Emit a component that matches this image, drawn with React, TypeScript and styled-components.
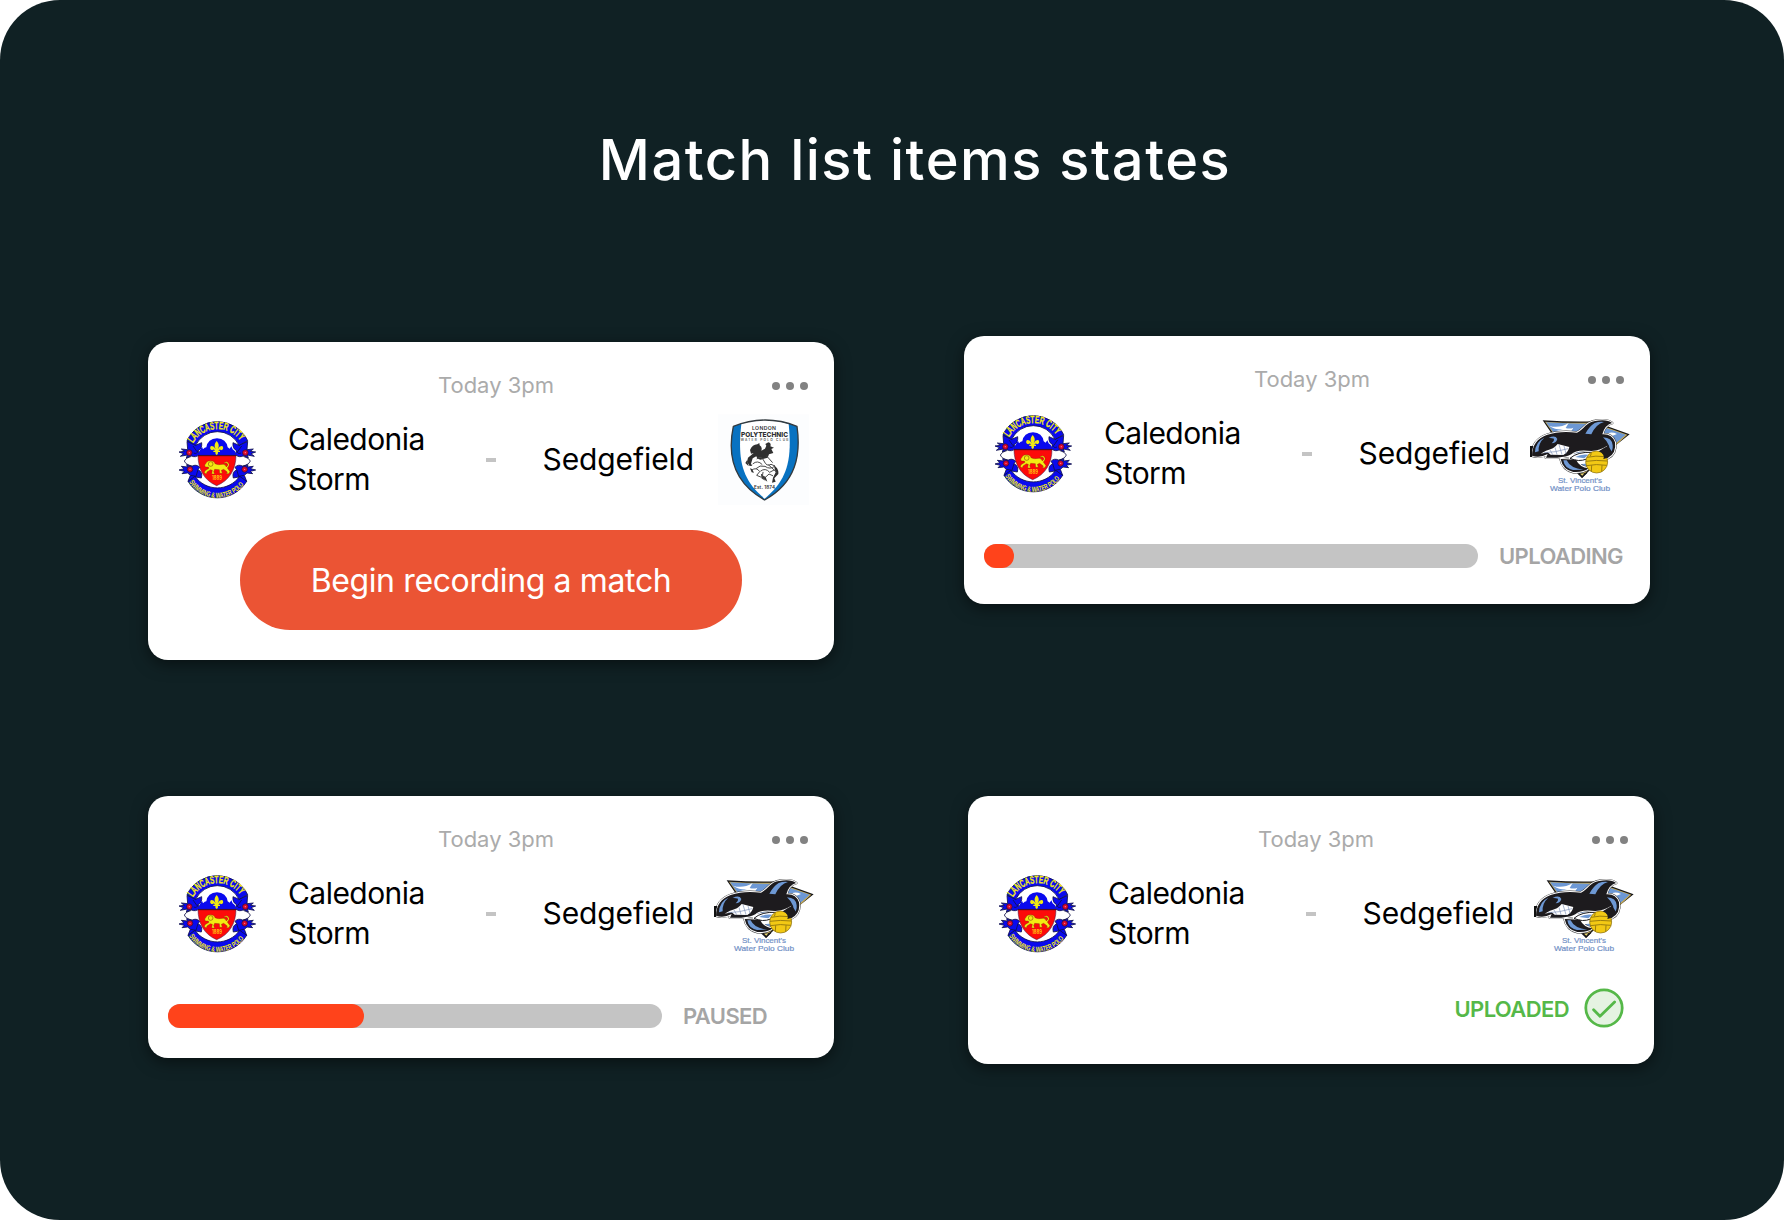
import React, { useId } from 'react'
import styled, { createGlobalStyle } from 'styled-components'

type MatchState = 'ready' | 'uploading' | 'paused' | 'uploaded'

export type MatchCardProps = {
  state: MatchState
  crest: 'polytechnic' | 'vincents'
  height: number
  progress?: number
  offset?: number
}

const GlobalStyle = createGlobalStyle`
  * {
    box-sizing: border-box;
  }

  body {
    margin: 0;
    background: #fff;
    font-family: Inter, 'Liberation Sans', sans-serif;
  }
`

const Page = styled.main`
  width: 1784px;
  height: 1220px;
  padding-top: 120px;
  border-radius: 60px;
  background: #102124;
  overflow: hidden;
`

const Title = styled.h1`
  margin: 0 0 136px;
  padding-left: 46px;
  color: #fff;
  font-size: 56px;
  font-weight: 500;
  line-height: 80px;
  letter-spacing: 1.5px;
  text-align: center;
`

const CardRow = styled.div<{ $gap: number; $height: number }>`
  display: flex;
  align-items: flex-start;
  gap: ${({ $gap }) => $gap}px;
  height: ${({ $height }) => $height}px;
  padding-left: 148px;
`

const Card = styled.article<{ $height: number; $offset: number }>`
  width: 686px;
  height: ${({ $height }) => $height}px;
  margin-top: ${({ $offset }) => $offset}px;
  border-radius: 20px;
  background: #fff;
  box-shadow: 0 4px 16px rgba(0, 0, 0, 0.5);
`

const CardHeader = styled.header`
  display: grid;
  grid-template-columns: 1fr auto 1fr;
  height: 63px;
  padding: 24px 26px 0 36px;
`

const Kickoff = styled.time`
  grid-column: 2;
  color: #ababab;
  font-size: 22px;
  line-height: 38px;
`

const MoreButton = styled.button`
  display: flex;
  justify-self: end;
  align-self: start;
  gap: 6px;
  padding: 16px 0 0;
  border: 0;
  background: none;
`

const Dot = styled.span`
  width: 8px;
  height: 8px;
  border-radius: 50%;
  background: #828282;
`

const Teams = styled.div`
  display: grid;
  grid-template-columns: 140px 198px 10px 198px 140px;
  align-items: center;
  height: 110px;
`

const CrestSlot = styled.div`
  display: flex;
  justify-content: center;
`

const TeamName = styled.span<{ $away?: boolean }>`
  max-width: ${({ $away }) => ($away ? 'none' : '160px')};
  padding-bottom: 2px;
  color: #000;
  font-size: 30px;
  line-height: 40px;
  letter-spacing: ${({ $away }) => ($away ? '-0.1px' : '-0.55px')};
  text-align: ${({ $away }) => ($away ? 'right' : 'left')};
`

const Dash = styled.span`
  width: 10px;
  height: 4px;
  background: #c4c4c4;
`

const RecordButton = styled.button`
  display: block;
  width: 502px;
  height: 100px;
  margin: 15px 0 0 92px;
  padding: 0;
  border: 0;
  border-radius: 50px;
  background: #eb5434;
  color: #fff;
  font-family: inherit;
  font-size: 32px;
  letter-spacing: -0.37px;
`

const Status = styled.div`
  display: flex;
  align-items: center;
  gap: 21px;
  margin-top: 35px;
  padding-left: 20px;
  height: 24px;
`

const Track = styled.div`
  width: 494px;
  height: 24px;
  border-radius: 12px;
  background: #c4c4c4;
`

const Fill = styled.div`
  height: 24px;
  border-radius: 12px;
  background: #ff431b;
`

const StatusLabel = styled.span<{ $done?: boolean }>`
  padding-top: ${({ $done }) => ($done ? 2 : 0)}px;
  color: ${({ $done }) => ($done ? '#55b848' : '#a5a5a5')};
  font-size: 22px;
  font-weight: 600;
  line-height: 24px;
  letter-spacing: -0.6px;
`

const Uploaded = styled.div`
  display: flex;
  align-items: center;
  justify-content: flex-end;
  gap: 15px;
  height: 40px;
  margin-top: 19px;
  padding-right: 30px;
`

const LancasterCrest = () => {
  const id = useId()
  const ribbon = (
    <g stroke="#10104a" strokeWidth="2.5" strokeLinejoin="round">
      <path
        fill="#0a0aee"
        d="M66 106 L92 118 L110 110 Q112 128 99 134 L104 145 Q92 157 78 149 L64 156 L67 147 L46 151 L56 143 L42 138 L58 136 L49 129 L68 131 Z"
      />
      <path
        fill="#0a0aee"
        d="M69 226 L76 208 L68 201 L51 203 L58 196 L42 192 L57 188 L49 181 L67 183 L65 176 L80 181 Q94 173 104 184 L99 191 Q114 198 109 216 L92 213 L88 232 Z"
      />
      <path fill="none" d="M79 151 Q61 156 58 165 Q62 176 81 180" />
    </g>
  )
  const roses = (
    <g>
      <path
        fill="none"
        stroke="#10104a"
        strokeWidth="2.5"
        d="M84 120 L96 137 M86 141 Q96 146 99 134 M77 208 L93 211 L99 191"
      />
      <circle cx="73" cy="140" r="8.5" fill="#d9082b" stroke="#10104a" strokeWidth="2" />
      <circle cx="75" cy="190" r="8.5" fill="#d9082b" stroke="#10104a" strokeWidth="2" />
      <circle cx="73" cy="140" r="2" fill="#ff8b95" />
      <circle cx="75" cy="190" r="2" fill="#ff8b95" />
    </g>
  )

  return (
    <svg width="110" height="110" viewBox="-6 -3 330 330">
      <defs>
        <path id={`${id}top`} d="M84 112 A84 84 0 0 1 230 112" />
        <path id={`${id}bottom`} d="M72 228 A100 100 0 0 0 242 228" />
      </defs>
      {ribbon}
      <g transform="translate(314 0) scale(-1 1)">{ribbon}</g>
      <path
        fill="#0a0aee"
        stroke="#10104a"
        strokeWidth="2.5"
        d="M66 104 A101 101 0 0 1 248 104 L222 118 A72 72 0 0 0 92 118 Z"
      />
      <path
        fill="#0a0aee"
        stroke="#10104a"
        strokeWidth="2.5"
        d="M69 226 A103 103 0 0 0 245 226 L224 211 A82 82 0 0 1 90 211 Z"
      />
      {roses}
      <g transform="translate(314 0) scale(-1 1)">{roses}</g>
      <path
        fill="#0a0aee"
        d="M99 149 L102 137 L108 127 L111 122 L114 130 L119 125 L124 124 Q128 99 156 97 Q184 99 188 124 L194 128 L199 121 L203 130 L210 136 L213 149 Z"
      />
      <path
        fill="#fd0a0a"
        stroke="#35104f"
        strokeWidth="1.5"
        d="M99 148 H213 C213 190 193 224 155 239 C118 224 99 190 99 148 Z"
      />
      <path d="M99 149 H213" stroke="#3b0b28" strokeWidth="3" />
      <g fill="#f3ec12">
        <path d="M155 105 Q166 117 158 130 Q165 117 173 121 Q178 130 168 133 Q165 128 160 134 H165 V138 H159 Q160 145 155 147 Q150 145 151 138 H145 V134 H150 Q146 128 142 133 Q132 130 137 121 Q145 117 152 130 Q144 117 155 105 Z" />
        <path
          stroke="#6b3309"
          strokeWidth="1"
          d="M123 172 Q125 164 136 164 Q148 164 150 173 Q158 178 175 175 Q182 176 184 183 Q192 177 186 172 Q179 169 177 173 Q178 166 187 168 Q198 175 187 186 L195 197 L191 203 H184 L187 198 L176 190 L169 193 L172 202 H164 L163 191 L149 190 L146 197 L149 204 H140 L142 193 L136 191 L126 198 L124 204 L118 200 L120 194 L132 187 L130 183 L121 183 L119 177 Z"
        />
        <circle cx="137" cy="174" r="7" fill="none" stroke="#8a5a08" strokeWidth="2" />
        <text
          x="141"
          y="222"
          fontSize="17"
          fontWeight="700"
          fill="#ffc20e"
          textLength="30"
          lengthAdjust="spacingAndGlyphs"
        >
          1889
        </text>
        <text
          fontFamily="Liberation Sans"
          fontSize="32"
          fontWeight="700"
          stroke="#f3ec12"
          strokeWidth="0.8"
        >
          <textPath href={`#${id}top`} textLength="168" lengthAdjust="spacingAndGlyphs">
            LANCASTER CITY
          </textPath>
        </text>
        <text fontFamily="Liberation Sans" fontSize="22" fontWeight="700">
          <textPath href={`#${id}bottom`} textLength="194" lengthAdjust="spacingAndGlyphs">
            SWIMMING &amp; WATER POLO
          </textPath>
        </text>
      </g>
    </svg>
  )
}

const PolytechnicCrest = () => (
  <svg width="100" height="110" viewBox="-3 0 300 330">
    <path fill="#fcfdfe" d="M9 28 H282 V300 H9 Z" />
    <path
      fill="#0872c1"
      d="M55 64 Q150 26 246 64 C258 150 244 232 149 285 C54 232 37 150 55 64 Z"
    />
    <path fill="#fff" d="M79 57 Q149 33 221 57 C232 165 217 225 149 281 C81 225 67 165 79 57 Z" />
    <path
      fill="none"
      stroke="#343b3f"
      strokeWidth="4"
      strokeLinejoin="round"
      d="M55 64 Q150 26 246 64 C258 150 244 232 149 285 C54 232 37 150 55 64 Z"
    />
    <g fill="#2f3133" fontFamily="Inter">
      <text x="111" y="76" fontSize="15.5" fontWeight="600" textLength="72">
        LONDON
      </text>
      <text
        x="78"
        y="96"
        fontSize="20.5"
        fontWeight="800"
        textLength="141"
        lengthAdjust="spacingAndGlyphs"
      >
        POLYTECHNIC
      </text>
      <text x="77" y="109" fontSize="9.5" fontWeight="600" fill="#555" textLength="143">
        WATER POLO CLUB
      </text>
      <text x="117" y="253" fontSize="14" fontWeight="600" textLength="63">
        Est. 1874
      </text>
    </g>
    <g fill="#303030">
      <path d="M105 135 Q112 119 127 118 L133 114 L134 121 Q143 126 139 137 L150 131 L154 122 L151 117 L160 112 Q170 114 166 124 L177 128 L169 132 L175 144 L162 148 L158 158 L137 164 Q126 163 124 154 L113 160 L108 176 L112 182 L104 183 L96 170 L99 158 L116 144 L108 146 Z" />
      <path d="M96 166 L91 174 L101 184 L99 176 Z M176 180 Q192 191 190 207 L178 220 L182 230 L171 233 L174 218 L182 202 Z M105 190 L110 202 L117 203 L111 192 Z" />
      <path d="M138 208 L152 216 L157 230 L147 222 L140 220 Z" />
    </g>
    <g fill="none" stroke="#4a4a4a" strokeWidth="3" strokeLinecap="round">
      <path d="M126 161 Q139 150 147 168 T168 178 L180 183 Q165 195 150 184 Q134 179 124 190" />
      <path d="M114 176 Q128 164 141 178 M110 195 Q125 185 134 200 L125 211 L137 216" />
      <path d="M155 153 L172 172 M137 198 Q151 187 164 202 L177 195 M139 208 L149 219 L162 207 L173 212" />
      <path d="M161 180 L185 202 M144 202 L141 220 L150 225" />
    </g>
  </svg>
)

const whaleBody =
  'M36 152 C36 122 52 100 80 90 Q120 76 171 83 C193 72 199 51 225 48 Q262 42 276 54 Q254 60 247 88 Q276 86 285 112 Q290 146 262 160 L252 160 Q262 146 262 122 Q240 136 214 138 Q168 132 154 148 Q140 156 112 158 L78 158 L83 147 Q59 160 36 152 Z'
const whaleFin = 'M122 162 Q128 194 160 201 Q190 203 206 190 Q178 186 168 164 Z'

const VincentsCrest = () => (
  <svg width="120" height="100" viewBox="0 -3 360 300">
    <path fill="#171719" d="M68 46 Q150 51 220 49 L329 88 L273 132 L186 219 Z" />
    <path fill="#c9ab52" d="M75 50 Q150 55 222 53 L322 89 L188 211 Z" />
    <path fill="#6d98d4" d="M78 52 Q150 57 222 56 L317 89 L187 204 Z" />
    <path
      fill="#fff"
      d="M87 62 Q116 72 146 54 L137 69 Q150 73 160 68 L151 83 L105 79 L132 73 Q109 76 87 62 Z M251 91 Q270 77 291 87 L274 94 L279 102 L258 116 L266 101 L259 99 L265 92 Z"
    />
    <path fill="#111" d="M30 123 H43 V156 H30 Z" />
    <g fill="#fff" stroke="#333" strokeWidth="8.5" strokeLinejoin="round">
      <path d={whaleFin} />
      <path d={whaleBody} />
    </g>
    <g fill="#fff" stroke="#fff" strokeWidth="6" strokeLinejoin="round">
      <path d={whaleFin} />
      <path d={whaleBody} />
      <path stroke="none" d="M140 150 L250 130 L250 170 L160 180 Z" />
    </g>
    <path fill="#111" d="M30 123 H40 L36 138 V156 H30 Z" />
    <g fill="#1d1b1e">
      <path d={whaleFin} />
      <path d={whaleBody} />
    </g>
    <path
      fill="#fff"
      d="M62 146 L78 137 Q102 132 113 117 L148 126 Q144 143 130 150 L92 149 L83 142 Z"
    />
    <path
      fill="none"
      stroke="#7d91b8"
      strokeWidth="2"
      d="M72 143 L106 140 L144 131 M90 135 L98 149 M105 127 L111 149 M117 119 L126 149 M132 123 L138 146"
    />
    <g fill="#6d98d4">
      <path d="M45 142 Q46 110 73 98 Q54 115 56 139 Z" />
      <path d="M86 99 Q106 89 112 102 Q108 115 95 115 Q104 108 102 101 Q94 98 86 99 Z" />
      <path d="M196 86 Q207 65 224 54 Q238 49 252 51 Q228 57 214 88 Z" />
      <path d="M249 97 Q277 99 278 121 Q280 139 266 149 Q276 121 249 97 Z" />
      <path d="M130 166 Q133 189 159 195 L190 194 Q151 190 140 166 Z" />
      <path d="M166 156 Q183 146 205 149 L193 160 Z" />
    </g>
    <path
      fill="none"
      stroke="#1d1b1e"
      strokeWidth="3"
      d="M150 160 Q172 140 216 142 M150 160 Q176 172 200 162"
    />
    <circle cx="230" cy="171" r="33" fill="#f2c914" stroke="#80650b" strokeWidth="2" />
    <path
      fill="none"
      stroke="#8a6f0c"
      strokeWidth="2.5"
      d="M201 157 Q226 151 257 155 M198 169 Q228 164 262 168 M199 182 Q229 176 260 181 M215 181 L214 200 M246 181 L245 200 M214 145 L211 154"
    />
    <path fill="#1d1b1e" d="M236 139 Q252 128 264 122 L276 140 Q268 158 250 162 Q256 148 236 139 Z" />
    <path fill="#171719" d="M171 205 L202 204 L186 219 Z" />
    <path fill="#e6d26d" d="M180 206 L193 205 L187 212 Z" />
    <g fill="#7190c6" stroke="#7190c6" strokeWidth="0.6" fontFamily="Liberation Sans">
      <text x="114" y="235" fontSize="23" textLength="132" lengthAdjust="spacingAndGlyphs">
        St. Vincent&apos;s
      </text>
      <text x="90" y="258" fontSize="23" textLength="180" lengthAdjust="spacingAndGlyphs">
        Water Polo Club
      </text>
    </g>
  </svg>
)

const CheckIcon = () => (
  <svg width="40" height="40" viewBox="0 0 40 40" fill="none">
    <circle cx="20" cy="20" r="18.2" fill="#e5f3e2" stroke="#55b848" strokeWidth="2.8" />
    <path
      d="M9.6 21.8 L16 28.3 L30.6 14"
      stroke="#55b848"
      strokeWidth="2.8"
      strokeLinecap="round"
      strokeLinejoin="round"
    />
  </svg>
)

const MatchFooter = ({ state, progress = 0 }: { state: MatchState; progress?: number }) => {
  if (state === 'ready') {
    return <RecordButton>Begin recording a match</RecordButton>
  }

  if (state === 'uploaded') {
    return (
      <Uploaded>
        <StatusLabel $done>UPLOADED</StatusLabel>
        <CheckIcon />
      </Uploaded>
    )
  }

  return (
    <Status>
      <Track>
        <Fill style={{ width: progress }} />
      </Track>
      <StatusLabel>{state === 'uploading' ? 'UPLOADING' : 'PAUSED'}</StatusLabel>
    </Status>
  )
}

const MatchCard = ({ state, crest, height, progress, offset = 0 }: MatchCardProps) => (
  <Card $height={height} $offset={offset}>
    <CardHeader>
      <Kickoff>Today 3pm</Kickoff>
      <MoreButton aria-label="More">
        <Dot />
        <Dot />
        <Dot />
      </MoreButton>
    </CardHeader>
    <Teams>
      <CrestSlot>
        <LancasterCrest />
      </CrestSlot>
      <TeamName>Caledonia Storm</TeamName>
      <Dash />
      <TeamName $away>Sedgefield</TeamName>
      <CrestSlot>{crest === 'polytechnic' ? <PolytechnicCrest /> : <VincentsCrest />}</CrestSlot>
    </Teams>
    <MatchFooter state={state} progress={progress} />
  </Card>
)

const App = () => {
  return (
    <>
      <GlobalStyle />
      <Page>
        <Title>Match list items states</Title>
        <CardRow $gap={130} $height={460}>
          <MatchCard state="ready" crest="polytechnic" height={318} offset={6} />
          <MatchCard state="uploading" crest="vincents" height={268} progress={30} />
        </CardRow>
        <CardRow $gap={134} $height={268}>
          <MatchCard state="paused" crest="vincents" height={262} progress={196} />
          <MatchCard state="uploaded" crest="vincents" height={268} />
        </CardRow>
      </Page>
    </>
  )
}

export default App
